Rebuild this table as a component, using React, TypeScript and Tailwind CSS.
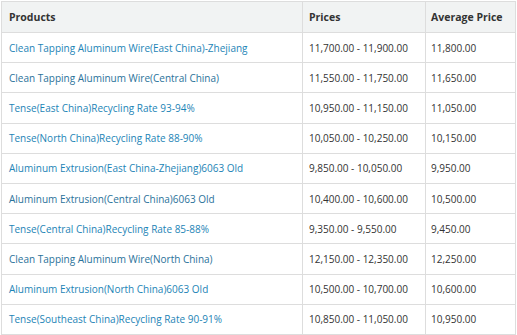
import React from "react";

const rows: { name: string; price: string; avg: string; dark?: boolean }[] = [
  { name: "Clean Tapping Aluminum Wire(East China)-Zhejiang", price: "11,700.00 - 11,900.00", avg: "11,800.00" },
  { name: "Clean Tapping Aluminum Wire(Central China)", price: "11,550.00 - 11,750.00", avg: "11,650.00", dark: true },
  { name: "Tense(East China)Recycling Rate 93-94%", price: "10,950.00 - 11,150.00", avg: "11,050.00" },
  { name: "Tense(North China)Recycling Rate 88-90%", price: "10,050.00 - 10,250.00", avg: "10,150.00" },
  { name: "Aluminum Extrusion(East China-Zhejiang)6063 Old", price: "9,850.00 - 10,050.00", avg: "9,950.00" },
  { name: "Aluminum Extrusion(Central China)6063 Old", price: "10,400.00 - 10,600.00", avg: "10,500.00", dark: true },
  { name: "Tense(Central China)Recycling Rate 85-88%", price: "9,350.00 - 9,550.00", avg: "9,450.00" },
  { name: "Clean Tapping Aluminum Wire(North China)", price: "12,150.00 - 12,350.00", avg: "12,250.00", dark: true },
  { name: "Aluminum Extrusion(North China)6063 Old", price: "10,500.00 - 10,700.00", avg: "10,600.00" },
  { name: "Tense(Southeast China)Recycling Rate 90-91%", price: "10,850.00 - 11,050.00", avg: "10,950.00" },
];

export default function App() {
  return (
    <div
      className="w-[517px] h-[335px] overflow-hidden bg-white pl-[1px] pt-[1px]"
      style={{ fontFamily: '"Open Sans", "Noto Sans", sans-serif' }}
    >
      <table className="w-[514px] border-collapse text-[10px] leading-none table-fixed">
        <colgroup>
          <col className="w-[301px]" />
          <col className="w-[123px]" />
          <col className="w-[90px]" />
        </colgroup>
        <thead>
          <tr className="bg-[#f1f3f3] h-[31px]">
            <th className="border border-[#dddddd] text-left font-bold text-[#333333] pl-[7px] text-[10.5px]">Products</th>
            <th className="border border-[#dddddd] text-left font-bold text-[#333333] pl-[6px] text-[10.5px]">Prices</th>
            <th className="border border-[#dddddd] text-left font-bold text-[#333333] pl-[5px] text-[10.5px]">Average Price</th>
          </tr>
        </thead>
        <tbody>
          {rows.map((r) => (
            <tr key={r.name} className="h-[30.2px]">
              <td className={`border border-[#dddddd] pl-[7px] whitespace-nowrap ${r.dark ? "text-[#2a729a]" : "text-[#1c84b6]"}`}>{r.name}</td>
              <td className="border border-[#dddddd] pl-[6px] text-[#333333] whitespace-nowrap">{r.price}</td>
              <td className="border border-[#dddddd] pl-[5px] text-[#333333] whitespace-nowrap">{r.avg}</td>
            </tr>
          ))}
        </tbody>
      </table>
    </div>
  );
}
